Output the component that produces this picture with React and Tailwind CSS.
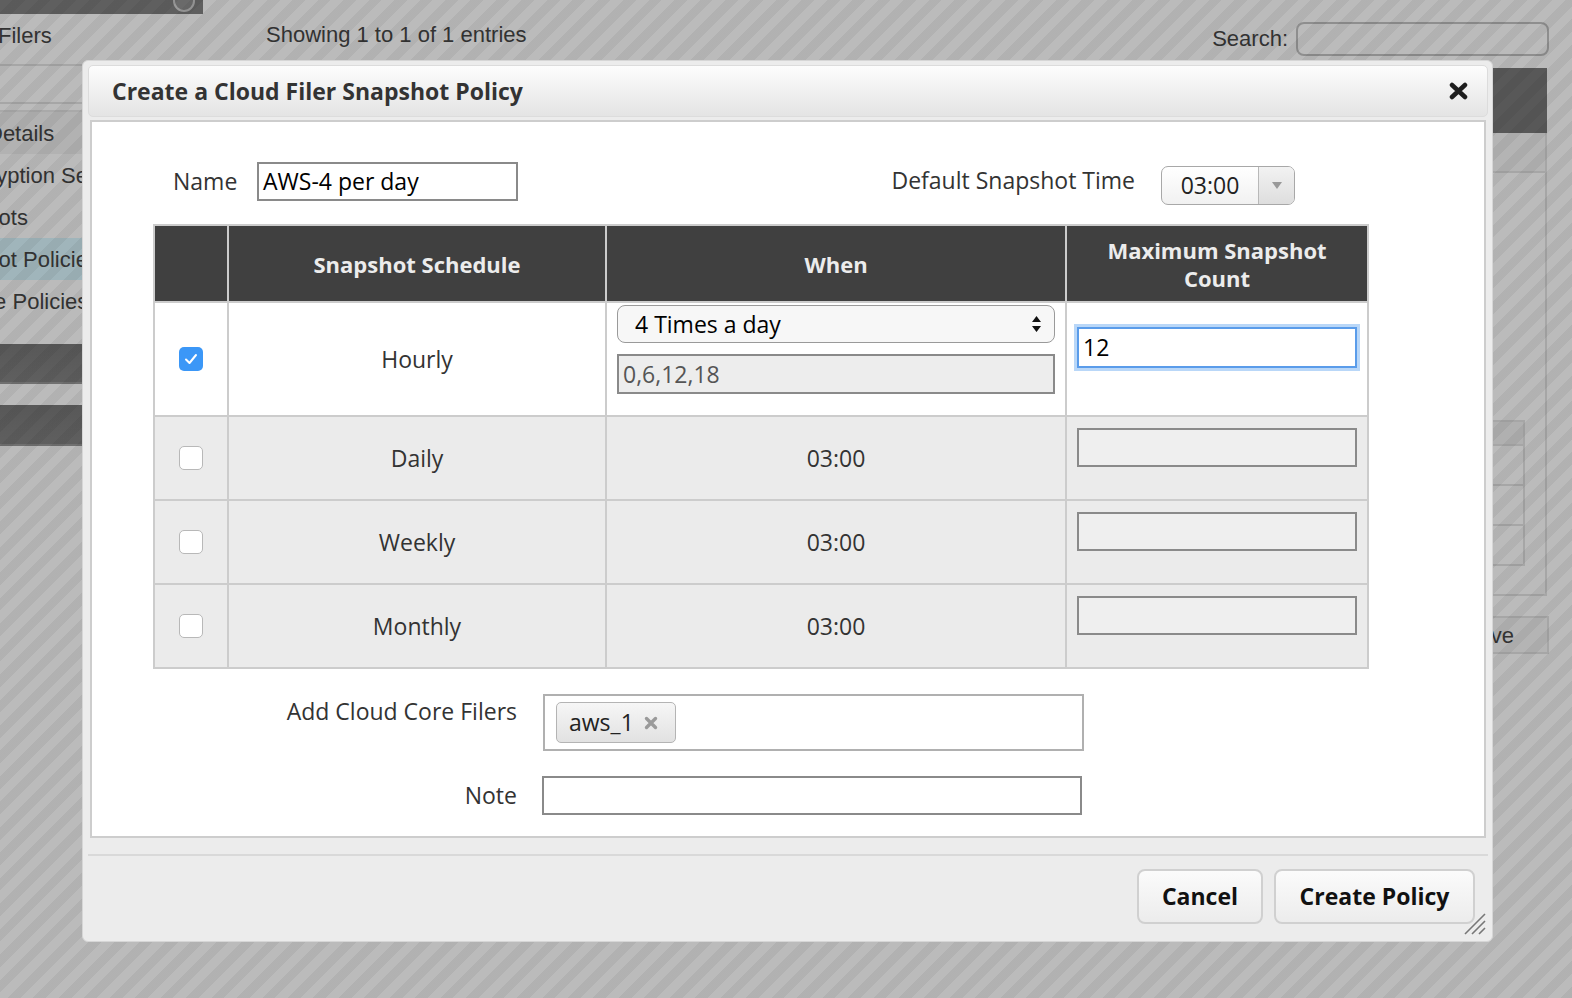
import React from "react";

const FONT = "font-['Open_Sans','Noto_Sans',sans-serif]";

function Checkbox({ checked }) {
  if (checked) {
    return (
      <div className="mx-auto flex h-[24px] w-[24px] items-center justify-center rounded-[5px] bg-[#3b97f7]">
        <svg width="14" height="12" viewBox="0 0 14 12">
          <path d="M2 6.5 L5.5 10 L12 2" fill="none" stroke="#fff" strokeWidth="2" strokeLinecap="round" strokeLinejoin="round" />
        </svg>
      </div>
    );
  }
  return <div className="mx-auto h-[24px] w-[24px] rounded-[5px] border-[1.5px] border-[#b8b8b8] bg-white" />;
}

function SidebarItem({ children, offset, active, dark }) {
  return (
    <div
      className={`flex h-[42px] items-center overflow-hidden whitespace-nowrap text-[22px] text-[#333] ${
        active ? "bg-[#a0b5bb]" : dark ? "bg-[#b2b2b2]" : ""
      }`}
    >
      <span className={offset}>{children}</span>
    </div>
  );
}

function Background() {
  return (
    <div className="flex h-full w-full font-['Liberation_Sans',Arial,sans-serif]">
      {/* left menu */}
      <div className="w-[240px] shrink-0">
        <div className="relative h-[14px] w-[203px] bg-[#5f5f5f]">
          <div className="absolute right-[8px] top-[-10px] h-[22px] w-[22px] rounded-full border-2 border-[#9a9a9a] bg-[#6a6a6a]" />
        </div>
        <SidebarItem offset="ml-[-2px]">Filers</SidebarItem>
        <div className="h-[8px]" />
        <div className="h-[38px] border-t-2 border-[#a6a6a6]" />
        <div className="h-[8px] border-t-2 border-[#a6a6a6]" />
        <div className="border-t-2 border-[#a9a9a9]" />
        <SidebarItem offset="ml-[-13px]" dark>Details</SidebarItem>
        <SidebarItem offset="ml-[-49px]">Encryption Settings</SidebarItem>
        <SidebarItem offset="ml-[-76px]">Snapshots</SidebarItem>
        <SidebarItem offset="ml-[-76px]" active>Snapshot Policies</SidebarItem>
        <SidebarItem offset="ml-[-67px]">Archive Policies</SidebarItem>
        <div className="mt-[22px] h-[40px] border-b-2 border-[#707070] bg-gradient-to-b from-[#585858] to-[#5f5f5f]" />
        <div className="mt-[21px] h-[41px] border-b-2 border-[#707070] bg-gradient-to-b from-[#585858] to-[#5f5f5f]" />
      </div>

      {/* main area */}
      <div className="flex flex-1 flex-col pr-[23px]">
        <div className="flex h-[68px] items-center">
          <span className="ml-[26px] text-[22px] text-[#333]">Showing 1 to 1 of 1 entries</span>
          <span className="ml-auto mt-[8px] text-[22px] text-[#333]">Search:</span>
          <div className="ml-[8px] mt-[10px] h-[34px] w-[253px] rounded-[8px] border-2 border-[#8e8e8e]" />
        </div>
        <div className="mr-[2px] flex flex-col">
          <div className="h-[65px] bg-[#585858]" />
          <div className="h-[40px] border-b-2 border-r-2 border-[#a6a6a6] bg-[#b4b4b4]" />
          <div className="flex h-[423px] flex-col border-b-2 border-r-2 border-[#a6a6a6] pt-[247px] pr-[20px]">
            <div className="ml-auto w-[600px] border-2 border-[#a6a6a6]">
              <div className="h-[24px] border-b-2 border-[#a6a6a6] bg-[#b0b0b0]" />
              <div className="h-[40px] border-b-2 border-[#a6a6a6]" />
              <div className="h-[40px] border-b-2 border-[#a6a6a6]" />
              <div className="h-[38px]" />
            </div>
          </div>
        </div>
        <div className="mt-[20px] flex justify-end">
          <div className="flex h-[38px] w-[120px] items-center justify-center border-2 border-[#a6a6a6] bg-[#b4b4b4] text-[22px] text-[#333]">
            Save
          </div>
        </div>
      </div>
    </div>
  );
}

function TimeSelect() {
  return (
    <div className="mt-[4px] flex h-[39px] w-[134px] overflow-hidden rounded-[7px] border border-[#a8a8a8] bg-gradient-to-b from-white to-[#f1f1f1]">
      <div className="flex w-[96px] items-center justify-center text-[#222]">03:00</div>
      <div className="flex flex-1 items-center justify-center border-l border-[#b8b8b8] bg-gradient-to-b from-[#f2f2f2] to-[#dedede]">
        <svg width="12" height="9" viewBox="0 0 12 9">
          <path d="M1 1 H11 L6 8 Z" fill="#999" />
        </svg>
      </div>
    </div>
  );
}

function EmptyInput() {
  return <div className="h-[39px] w-[280px] border-2 border-[#8a8a8a] bg-[#efefef]" />;
}

function Modal() {
  const th = "border-x-2 border-[#cccccc] bg-[#404040] text-center text-[22px] font-bold leading-[28px] text-[#ececec]";
  const td = "border-2 border-[#cccccc] p-0";
  const rows = ["Daily", "Weekly", "Monthly"];
  return (
    <div className={`absolute left-[82px] top-[60px] flex h-[882px] w-[1411px] flex-col rounded-[6px] border border-[#d6d6d6] bg-[#ececec] pl-[5px] pr-[4px] pt-[4px] text-[23px] ${FONT}`}>
      {/* title */}
      <div className="flex h-[52px] items-center justify-between rounded-[5px] border border-[#dcdcdc] bg-gradient-to-b from-[#fdfdfd] to-[#e4e4e4] pl-[23px] pr-[19px]">
        <span className="font-bold text-[#333]">Create a Cloud Filer Snapshot Policy</span>
        <svg width="19" height="18" viewBox="0 0 19 18">
          <path d="M3 3 L16 15 M16 3 L3 15" stroke="#1e1e1e" strokeWidth="4.5" strokeLinecap="round" />
        </svg>
      </div>

      {/* content */}
      <div className="mx-[2px] mt-[3px] h-[718px] border-2 border-[#cdcdcd] bg-white pl-[61px] pt-[40px]">
        <div className="flex w-[1214px] items-start">
          <div className="flex h-[39px] items-center">
            <span className="w-[104px] pl-[20px] text-[#333]">Name</span>
            <div className="flex h-[39px] w-[261px] items-center border-2 border-[#8a8a8a] pl-[4px] text-black">
              AWS-4 per day
            </div>
          </div>
          <div className="ml-auto flex items-start pr-[72px]">
            <span className="mr-[26px] mt-[1px] text-[#333]">Default Snapshot Time</span>
            <TimeSelect />
          </div>
        </div>

        <table className="mt-[19px] w-[1214px] table-fixed border-collapse border-2 border-[#cccccc]">
          <colgroup>
            <col className="w-[74px]" />
            <col className="w-[378px]" />
            <col className="w-[460px]" />
            <col className="w-[302px]" />
          </colgroup>
          <thead>
            <tr className="h-[77px]">
              <th className={th}></th>
              <th className={th}>Snapshot Schedule</th>
              <th className={th}>When</th>
              <th className={th}>
                Maximum Snapshot
                <br />
                Count
              </th>
            </tr>
          </thead>
          <tbody className="text-[#333]">
            <tr className="h-[114px] bg-white">
              <td className={td}>
                <Checkbox checked />
              </td>
              <td className={`${td} text-center`}>Hourly</td>
              <td className={`${td} px-[10px] pb-[21px] pt-[2px] align-top`}>
                <div className="flex h-[38px] items-center justify-between rounded-[8px] border border-[#9a9a9a] bg-[#f7f7f7] pl-[17px] pr-[12px] text-black">
                  <span>4 Times a day</span>
                  <svg width="11" height="20" viewBox="0 0 11 20">
                    <path d="M5.5 2 L10 8 H1 Z M5.5 18 L10 12 H1 Z" fill="#111" />
                  </svg>
                </div>
                <div className="mt-[11px] flex h-[40px] items-center border-2 border-[#8a8a8a] bg-[#ededed] pl-[4px] text-[#555]">
                  0,6,12,18
                </div>
              </td>
              <td className={`${td} pl-[10px] pt-[24px] align-top`}>
                <div className="flex h-[41px] w-[280px] items-center border-2 border-[#5a9cea] bg-white pl-[4px] text-black shadow-[0_0_0_3px_#b9d7f8]">
                  12
                </div>
              </td>
            </tr>
            {rows.map((r) => (
              <tr key={r} className="h-[84px] bg-[#ebebeb]">
                <td className={td}>
                  <Checkbox />
                </td>
                <td className={`${td} text-center`}>{r}</td>
                <td className={`${td} text-center`}>03:00</td>
                <td className={`${td} pl-[10px] pt-[11px] align-top`}>
                  <EmptyInput />
                </td>
              </tr>
            ))}
          </tbody>
        </table>

        <div className="mt-[25px] flex items-start">
          <span className="w-[364px] text-right text-[#333]">Add Cloud Core Filers</span>
          <div className="ml-[26px] h-[57px] w-[541px] border-2 border-[#b0b0b0] pl-[11px] pt-[6px]">
            <div className="flex h-[41px] w-[120px] items-center rounded-[5px] border border-[#b4b4b4] bg-gradient-to-b from-[#f6f6f6] to-[#e2e2e2] pl-[12px] text-[#222]">
              aws_1
              <svg className="ml-[10px]" width="14" height="14" viewBox="0 0 14 14">
                <path d="M2.5 2.5 L11.5 11.5 M11.5 2.5 L2.5 11.5" stroke="#9a9a9a" strokeWidth="3.4" strokeLinecap="round" />
              </svg>
            </div>
          </div>
        </div>

        <div className="mt-[25px] flex items-center">
          <span className="w-[364px] text-right text-[#333]">Note</span>
          <div className="ml-[25px] h-[39px] w-[540px] border-2 border-[#8a8a8a]" />
        </div>
      </div>

      {/* footer */}
      <div className="mt-[16px] h-[2px] bg-[#d9d9d9]" />
      <div className="mt-[13px] flex justify-end gap-[11px] pr-[13px]">
        <button className="h-[55px] w-[126px] rounded-[8px] border-2 border-[#d0d0d0] bg-gradient-to-b from-[#fbfbfb] to-[#ececec] font-bold text-[#111]">
          Cancel
        </button>
        <button className="h-[55px] w-[201px] rounded-[8px] border-2 border-[#d0d0d0] bg-gradient-to-b from-[#fbfbfb] to-[#ececec] font-bold text-[#111]">
          Create Policy
        </button>
      </div>

      {/* resize grip */}
      <svg className="absolute bottom-[6px] right-[6px]" width="23" height="22" viewBox="0 0 23 22">
        <path d="M2 21 L22 1 M9 21 L22 8 M16 21 L22 15" stroke="#777" strokeWidth="1.6" />
      </svg>
    </div>
  );
}

export default function App() {
  return (
    <div className="relative h-[998px] w-full overflow-hidden bg-[#bbbbbb]">
      <Background />
      {/* striped overlay */}
      <div className="absolute inset-0 bg-[repeating-linear-gradient(135deg,rgba(0,0,0,0)_0px,rgba(0,0,0,0)_9px,rgba(0,0,0,0.05)_9px,rgba(0,0,0,0.05)_18px)]" />
      <Modal />
    </div>
  );
}
